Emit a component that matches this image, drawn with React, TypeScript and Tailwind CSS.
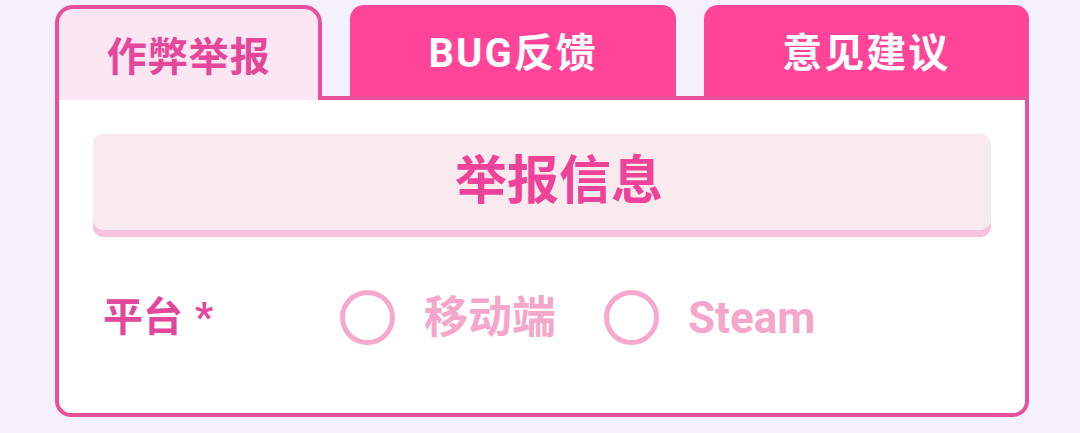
import { useState } from 'react';

const tabs = ['作弊举报', 'BUG反馈', '意见建议'];
const platforms = ['移动端', 'Steam'];

const font = { fontFamily: 'Roboto, "Noto Sans CJK SC", sans-serif' };

const TabBar = ({ active }: { active: number }) => {
  return (
    <div className="flex items-end gap-[28px] h-[91px]">
      {tabs.map((name, index) =>
        index === active ? (
          <div
            key={name}
            className="relative z-10 -mb-[4px] flex h-[95px] w-[268px] items-center justify-center rounded-t-[18px] border-4 border-b-0 border-[#e9509c] bg-[#fde6f3] pt-[6px] text-[40px] font-bold tracking-[1px] text-[#e4479a]"
          >
            {name}
          </div>
        ) : (
          <div
            key={name}
            className="flex h-[91px] w-[326px] items-center justify-center rounded-t-[14px] bg-[#ff4499] pt-[6px] text-[40px] font-bold tracking-[2px] text-white"
          >
            {name}
          </div>
        )
      )}
    </div>
  );
};

const PlatformRow = () => {
  const [picked, setPicked] = useState<string | null>(null);

  return (
    <div className="mt-[60px] flex items-center pl-[10px]">
      <div className="w-[237px] text-[40px] font-bold leading-none text-[#e2479b]">
        平台 <span className="ml-[2px]">*</span>
      </div>
      <div className="flex items-center gap-[48px]">
        {platforms.map((p) => (
          <button
            key={p}
            onClick={() => setPicked(p)}
            className="flex items-center gap-[29px]"
          >
            <span className="flex h-[55px] w-[55px] items-center justify-center rounded-full border-[5px] border-[#f6a9cc]">
              {picked === p && <span className="h-[25px] w-[25px] rounded-full bg-[#f6a9cc]"></span>}
            </span>
            <span className="text-[44px] font-bold leading-none text-[#f5a6cb]">{p}</span>
          </button>
        ))}
      </div>
    </div>
  );
};

export default function App() {
  return (
    <div className="min-h-screen bg-[#f5f0fd] pl-[55px] pt-[5px]" style={font}>
      <div className="w-[974px]">
        <TabBar active={0} />
        <div className="h-[321px] rounded-b-[16px] border-4 border-[#e9509c] bg-white px-[34px] pt-[34px]">
          <div className="flex h-[96px] items-center justify-center rounded-[10px] bg-[#f8eaee] pl-[34px] text-[52px] font-bold text-[#ee4399] shadow-[0_7px_0_#f6c2dc]">
            举报信息
          </div>
          <PlatformRow />
        </div>
      </div>
    </div>
  );
}
